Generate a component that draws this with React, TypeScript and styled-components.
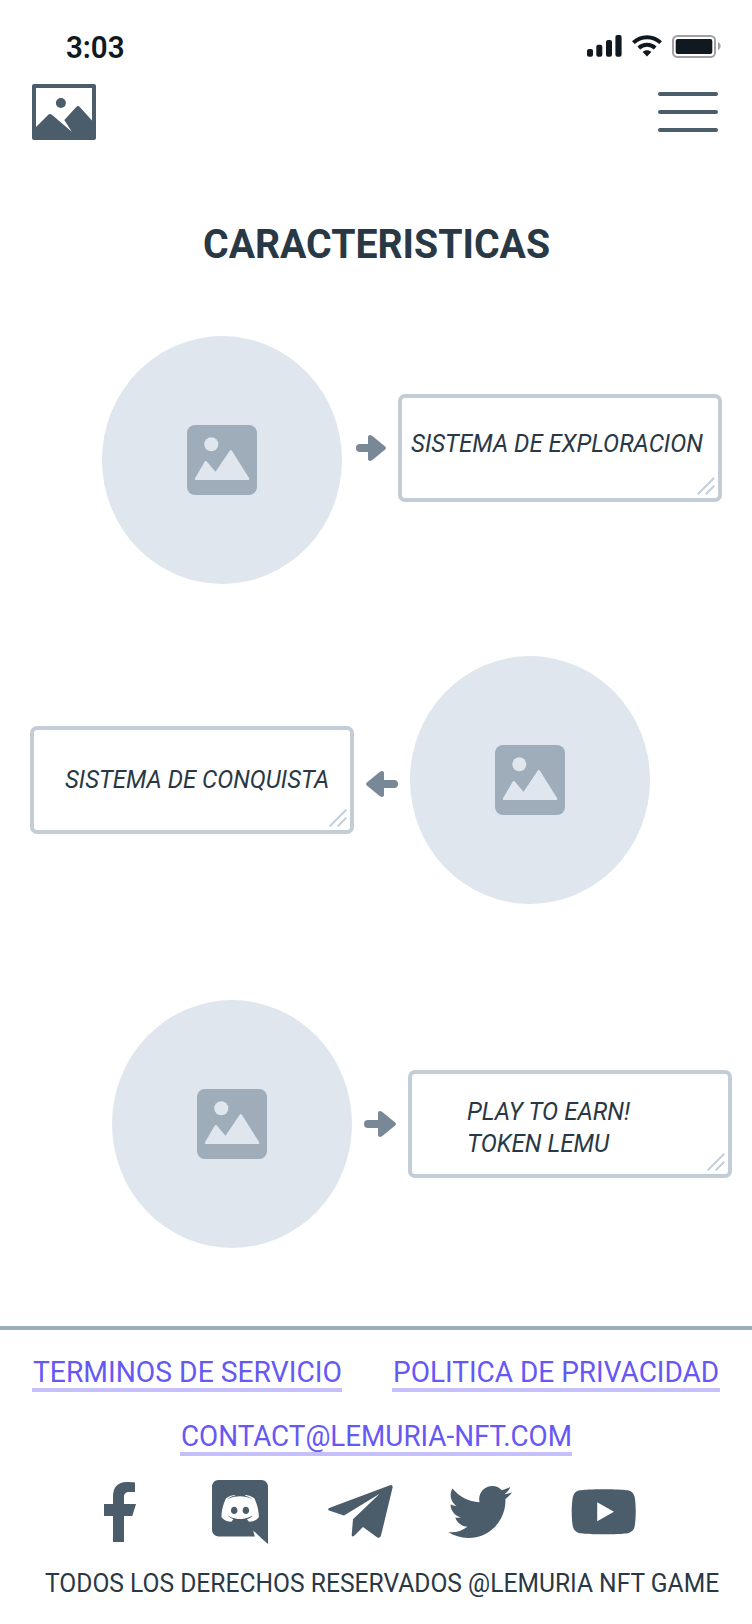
import React from "react";
import styled, { createGlobalStyle } from "styled-components";
import { FaTwitter, FaYoutube } from "react-icons/fa";

const GlobalStyle = createGlobalStyle`
  * { box-sizing: border-box; }
  body { margin: 0; background: #fff; font-family: Roboto, "Liberation Sans", sans-serif; }
  svg { display: block; flex: none; }
`;

const Screen = styled.main`
  width: 752px;
  height: 1624px;
  display: flex;
  flex-direction: column;
  background: #fff;
  color: #293845;
  overflow: hidden;
`;

const StatusBar = styled.div`
  height: 84px;
  padding: 31px 31px 0 66px;
  display: flex;
  justify-content: space-between;
  align-items: flex-start;
`;

const StatusIcons = styled.div`
  display: flex;
  gap: 10px;
  padding-top: 4px;
`;

/* Condensed label: the width factor narrows the glyphs from the left edge. */
const Label = styled.span<{ $stretch: number }>`
  display: block;
  width: max-content;
  white-space: pre;
  transform: scaleX(${(p) => p.$stretch});
  transform-origin: left center;
`;

const Clock = styled.time`
  padding-top: 1px;
  font-size: 31px;
  line-height: 32px;
  font-weight: 600;
  color: #101820;
`;

const Header = styled.header`
  height: 56px;
  padding: 0 34px 0 32px;
  display: flex;
  justify-content: space-between;
  align-items: center;
`;

const MenuButton = styled.button`
  width: 60px;
  height: 40px;
  padding: 0;
  border: 0;
  background: none;
  display: flex;
  flex-direction: column;
  justify-content: space-between;
`;

const MenuBar = styled.span`
  width: 100%;
  height: 4px;
  border-radius: 2px;
  background: #4b5c6b;
`;

const Title = styled.h1`
  margin: 80px 0 68px 202.5px;
  font-size: 41px;
  line-height: 48px;
  font-weight: 700;
`;

const Feature = styled.section<{ $left: number; $reverse?: boolean; $below: number }>`
  height: 248px;
  flex: none;
  margin-left: ${(p) => p.$left}px;
  margin-bottom: ${(p) => p.$below}px;
  display: flex;
  flex-direction: ${(p) => (p.$reverse ? "row-reverse" : "row")};
  justify-content: ${(p) => (p.$reverse ? "flex-end" : "flex-start")};
  align-items: center;
  gap: 12px;
`;

const Disc = styled.div`
  width: 240px;
  height: 248px;
  flex: none;
  border-radius: 50%;
  background: #dfe6ee;
  display: grid;
  place-items: center;
`;

const ArrowSlot = styled.div<{ $lift: number }>`
  width: 32px;
  margin-bottom: ${(p) => p.$lift}px;
  display: flex;
  justify-content: flex-end;
`;

const Note = styled.div<{ $pad: number; $lift: number; $top: number }>`
  position: relative;
  width: 324px;
  height: 108px;
  flex: none;
  margin-bottom: ${(p) => p.$lift}px;
  padding: ${(p) => p.$top}px 0 0 ${(p) => p.$pad}px;
  border: 4px solid #c3cdd7;
  border-radius: 7px;
  font-size: 25.3px;
  line-height: 32px;
  font-style: italic;
`;

const Grip = styled.svg`
  position: absolute;
  right: 3px;
  bottom: 3px;
`;

const Footer = styled.footer`
  flex: none;
  height: 298px;
  border-top: 4px solid #9eadb9;
  display: flex;
  flex-direction: column;
`;

const LinkRow = styled.nav<{ $top: number }>`
  margin-top: ${(p) => p.$top}px;
  padding: 0 32px;
  display: flex;
  justify-content: space-between;
`;

const FooterLink = styled.a<{ $w: number; $indent?: number }>`
  width: ${(p) => p.$w}px;
  height: 38px;
  margin-left: ${(p) => p.$indent ?? 0}px;
  padding-left: 0.5px;
  border-bottom: 4px solid #c5c0fb;
  color: #6558f5;
  font-size: 29.5px;
  line-height: 36px;
  text-decoration: none;
`;

const Socials = styled.div`
  height: 64px;
  margin: 24px 0 0 60px;
  display: grid;
  grid-template: 64px / repeat(4, 120px) 128px;
  place-items: center;
  color: #4b5c6b;
`;

const Legal = styled.p`
  margin: 24px 0 0 45px;
  font-size: 25.3px;
  line-height: 32px;
`;

function Signal() {
  return (
    <svg width="35" height="24" fill="#101820">
      <rect x="0" y="14" width="6" height="7.7" rx="2" />
      <rect x="9.3" y="9.7" width="6" height="12" rx="2" />
      <rect x="19" y="5" width="6" height="16.7" rx="2" />
      <rect x="28.4" y="0" width="6.2" height="21.7" rx="2" />
    </svg>
  );
}

function Wifi() {
  return (
    <svg width="30" height="24" fill="none" stroke="#101820" strokeWidth="4">
      <path d="M1.4 7.6C9 .3 21 .3 28.6 7.6" />
      <path d="M6.8 12.9C11.5 8.6 18.5 8.6 23.2 12.9" />
      <path d="M10.7 17C13 14.7 17 14.7 19.3 17L15 21.4Z" fill="#101820" stroke="none" />
    </svg>
  );
}

function Battery() {
  return (
    <svg width="49" height="24">
      <rect x="1" y="1" width="42" height="21" rx="4.5" fill="none" stroke="#a3a1a3" strokeWidth="2" />
      <rect x="3.7" y="3.9" width="36.6" height="15.2" rx="2" fill="#101820" />
      <path d="M46 7C49.5 8.5 49.5 13.5 46 15Z" fill="#a3a1a3" />
    </svg>
  );
}

function Logo() {
  return (
    <svg width="64" height="56" viewBox="0 0 64 56" fill="#4b5c6b">
      <path fillRule="evenodd" d="M2 0H62Q64 0 64 2V54Q64 56 62 56H2Q0 56 0 54V2Q0 0 2 0ZM4 4V43L16.5 30.6Q18 29.3 19.6 30.6L39.8 47.8L32.3 36L44.7 22.6Q46 21.4 47.3 22.6L60 36.6V4Z" />
      <circle cx="28.9" cy="19" r="5" />
    </svg>
  );
}

function Picture() {
  return (
    <svg width="70" height="70" viewBox="0 0 70 70">
      <rect width="70" height="70" rx="8" fill="#9eadb9" />
      <g fill="#dfe6ee">
        <circle cx="24.3" cy="19.2" r="7" />
        <path d="M8 53.3L17.8 36.5Q18.7 35.3 19.8 36.5L28.5 46.7L42.7 25.7Q43.8 24.3 44.9 25.7L62.2 53.3Q62.6 55 61.3 55H8.8Q7.3 55 8 53.3Z" />
      </g>
    </svg>
  );
}

function Arrow({ length, left }: { length: number; left?: boolean }) {
  return (
    <svg width={length} height="26" fill="#788896">
      <g transform={left ? `translate(${length} 0) scale(-1 1)` : undefined}>
        <rect y="9" width={length - 14} height="8" rx="4" />
        <path transform={`translate(${length - 18} 0)`} d="M0 2Q0 0 2 0Q3 0 4 .7L17.2 11.5Q18.7 13 17.2 14.5L4 25.3Q3 26 2 26Q0 26 0 24Z" />
      </g>
    </svg>
  );
}

function ResizeGrip() {
  return (
    <Grip width="18" height="18" fill="none" stroke="#c3cfdb" strokeWidth="2">
      <path d="M.8 17.2L17.2 .8M8.8 17.2L17.2 8.8" />
    </Grip>
  );
}

function Facebook() {
  return (
    <svg width="32" height="60" viewBox="0 0 32 60" fill="currentColor">
      <path d="M9 60V34H0V22H9V14.5C9 5.2 14 0 22.5 0C26 0 29 .2 31 .5V10H25.5C21.5 10 20 12 20 15V22H32L28.3 34H20V60Z" />
    </svg>
  );
}

function Discord() {
  return (
    <svg width="56" height="64" viewBox="0 0 448 512" fill="currentColor">
      <path d="M297.216 243.2c0 15.616-11.52 28.416-26.112 28.416-14.336 0-26.112-12.8-26.112-28.416s11.52-28.416 26.112-28.416c14.592 0 26.112 12.8 26.112 28.416zm-119.552-28.416c-14.592 0-26.112 12.8-26.112 28.416s11.776 28.416 26.112 28.416c14.592 0 26.112-12.8 26.112-28.416.256-15.616-11.52-28.416-26.112-28.416zM448 52.736V512c-64.494-56.994-43.868-38.128-118.784-107.776l13.568 47.36H52.48C23.552 451.584 0 428.032 0 398.848V52.736C0 23.552 23.552 0 52.48 0h343.04C424.448 0 448 23.552 448 52.736zm-72.96 242.688c0-82.432-36.864-149.248-36.864-149.248-36.864-27.648-71.936-26.88-71.936-26.88l-3.584 4.096c43.52 13.312 63.744 32.512 63.744 32.512-60.811-33.329-132.244-33.335-191.232-7.424-9.472 4.352-15.104 7.424-15.104 7.424s21.248-20.224 67.328-33.536l-2.56-3.072s-35.072-.768-71.936 26.88c0 0-36.864 66.816-36.864 149.248 0 0 21.504 37.12 78.08 38.912 0 0 9.472-11.52 17.152-21.248-32.512-9.728-44.8-30.208-44.8-30.208 3.766 2.636 9.976 6.053 10.496 6.4 43.21 24.198 104.588 32.126 159.744 8.96 8.96-3.328 18.944-8.192 29.44-15.104 0 0-12.8 20.992-46.336 30.464 7.68 9.728 16.896 20.736 16.896 20.736 56.576-1.792 78.336-38.912 78.336-38.912z" />
    </svg>
  );
}

function Telegram() {
  return (
    <svg width="65" height="54" viewBox="0 0 65 54" fill="currentColor">
      <path d="M1.2 23L62 .2Q65 -.4 64.6 2.4L53 50.6Q51.8 54 49 52.2L35 42L26.2 50.8Q23.6 52.4 23.7 49.8L25 34.3L51.7 8.7L16 30.4L1 25.6Q-.8 24.2 1.2 23Z" />
    </svg>
  );
}

export default function App() {
  return (
    <Screen>
      <GlobalStyle />
      <StatusBar>
        <Clock><Label $stretch={0.95}>3:03</Label></Clock>
        <StatusIcons>
          <Signal />
          <Wifi />
          <Battery />
        </StatusIcons>
      </StatusBar>
      <Header>
        <Logo />
        <MenuButton aria-label="Menu">
          <MenuBar />
          <MenuBar />
          <MenuBar />
        </MenuButton>
      </Header>
      <Title><Label $stretch={0.956}>CARACTERISTICAS</Label></Title>

      <Feature $left={102} $below={72}>
        <Disc><Picture /></Disc>
        <ArrowSlot $lift={24}><Arrow length={30} /></ArrowSlot>
        <Note $pad={8.5} $lift={24} $top={30}>
          <Label $stretch={0.952}>SISTEMA DE EXPLORACION</Label>
          <ResizeGrip />
        </Note>
      </Feature>
      <Feature $left={30} $reverse $below={96}>
        <Disc><Picture /></Disc>
        <ArrowSlot $lift={-8}><Arrow length={32} left /></ArrowSlot>
        <Note $pad={30.5} $lift={0} $top={34}>
          <Label $stretch={0.948}>SISTEMA DE CONQUISTA</Label>
          <ResizeGrip />
        </Note>
      </Feature>
      <Feature $left={112} $below={78}>
        <Disc><Picture /></Disc>
        <ArrowSlot $lift={0}><Arrow length={32} /></ArrowSlot>
        <Note $pad={54.5} $lift={0} $top={22}>
          <Label $stretch={0.956}>PLAY TO EARN!</Label>
          <Label $stretch={0.956}>TOKEN LEMU</Label>
          <ResizeGrip />
        </Note>
      </Feature>

      <Footer>
        <LinkRow $top={24}>
          <FooterLink $w={310}><Label $stretch={0.958}>TERMINOS DE SERVICIO</Label></FooterLink>
          <FooterLink $w={328}><Label $stretch={0.949}>POLITICA DE PRIVACIDAD</Label></FooterLink>
        </LinkRow>
        <LinkRow $top={26}>
          <FooterLink $w={392} $indent={148}><Label $stretch={0.942}>CONTACT@LEMURIA-NFT.COM</Label></FooterLink>
        </LinkRow>
        <Socials>
          <Facebook />
          <Discord />
          <Telegram />
          <FaTwitter size={64} />
          <FaYoutube size={67.5} />
        </Socials>
        <Legal><Label $stretch={0.973}>TODOS LOS DERECHOS RESERVADOS @LEMURIA NFT GAME</Label></Legal>
      </Footer>
    </Screen>
  );
}
